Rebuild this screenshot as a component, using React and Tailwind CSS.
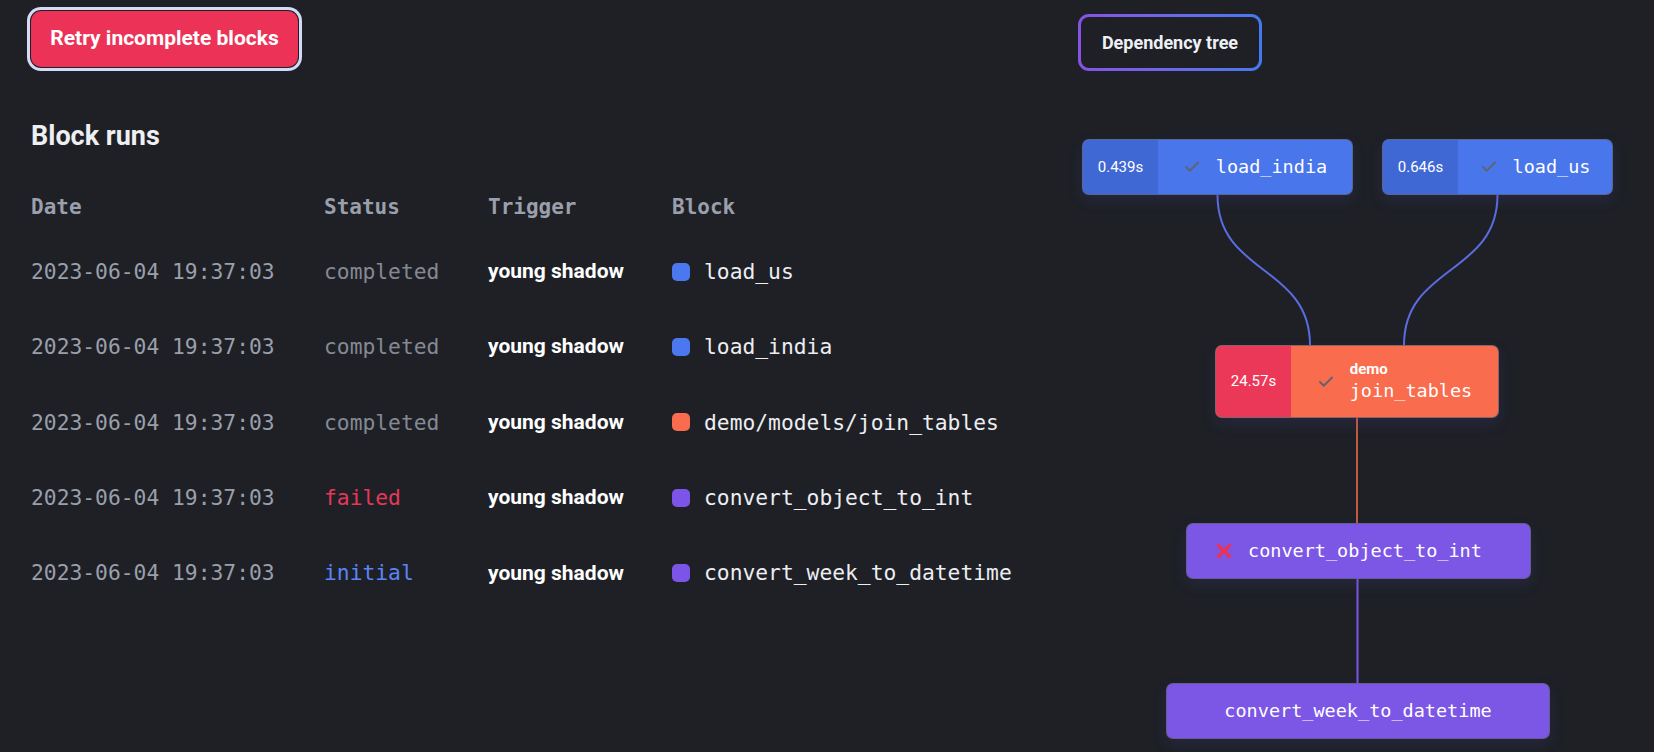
import { Check, X } from 'lucide-react'

// Block run rows shown in the table on the left
const runs = [
  { status: 'completed', block: 'load_us', color: 'bg-[#4b78ee]' },
  { status: 'completed', block: 'load_india', color: 'bg-[#4b78ee]' },
  { status: 'completed', block: 'demo/models/join_tables', color: 'bg-[#f96c4e]' },
  { status: 'failed', block: 'convert_object_to_int', color: 'bg-[#7c55e8]' },
  { status: 'initial', block: 'convert_week_to_datetime', color: 'bg-[#7c55e8]' },
]

const statusClass = {
  completed: 'text-[#858993] font-light',
  failed: 'text-[#e4385a]',
  initial: 'text-[#5b84f5]',
}

const mono = 'font-["DejaVu_Sans_Mono",monospace]'

function RunsTable() {
  return (
    <div className={`${mono} mt-[29px]`}>
      <div className="grid grid-cols-[293px_164px_184px_1fr] h-[53px] items-center text-[21px] font-bold text-[#9a9fab]">
        <span>Date</span>
        <span>Status</span>
        <span>Trigger</span>
        <span>Block</span>
      </div>
      {runs.map((r, i) => (
        <div key={i} className="grid grid-cols-[293px_164px_184px_1fr] h-[75.4px] items-center text-[21.3px]">
          <span className="text-[#9a9faa]">2023-06-04 19:37:03</span>
          <span className={statusClass[r.status]}>{r.status}</span>
          <span className="font-['Roboto',sans-serif] font-bold text-[21px] text-white">young shadow</span>
          <span className="flex items-center gap-[14px] text-[#eceef2]">
            <span className={`w-[18px] h-[18px] rounded-[5px] ${r.color}`} />
            {r.block}
          </span>
        </div>
      ))}
    </div>
  )
}

// timed node: darker timing strip on the left, check + name on the right
function TimedNode({ className, time, name, group, base, strip }) {
  return (
    <div className={`absolute flex rounded-[7px] overflow-hidden border border-[#5b6070]/70 shadow-[0_6px_14px_rgba(70,70,170,0.18)] ${base} ${className}`}>
      <div className={`w-[75px] shrink-0 flex items-center justify-center font-['Roboto',sans-serif] text-[15px] text-white ${strip}`}>
        {time}
      </div>
      <div className="flex-1 flex items-center justify-center gap-[15px]">
        <Check className="w-[18px] h-[18px] text-[#5f6470]" strokeWidth={2.5} />
        <div className="flex flex-col">
          {group && <span className="font-['Roboto',sans-serif] font-bold text-[15px] leading-[18px] text-white">{group}</span>}
          <span className={`${mono} text-[18.5px] leading-[26px] text-white`}>{name}</span>
        </div>
      </div>
    </div>
  )
}

function DependencyGraph() {
  return (
    <div className="relative mt-[29px] h-[652px]">
      <svg className="absolute inset-0" width="576" height="652" fill="none">
        <path d="M139.5 95 C139.5 175, 232 165, 232 245" stroke="#5a6de0" strokeWidth="2" />
        <path d="M419.5 95 C419.5 175, 326 165, 326 245" stroke="#5a6de0" strokeWidth="2" />
        <path d="M279 318 L279 423" stroke="#f96c4e" strokeWidth="1.5" />
        <path d="M279.5 479 L279.5 583" stroke="#7c57e6" strokeWidth="2" />
      </svg>

      <TimedNode
        className="left-[4px] top-[39px] w-[271px] h-[56px]"
        time="0.439s"
        name="load_india"
        base="bg-[#4a76ec]"
        strip="bg-[#4068d4]"
      />
      <TimedNode
        className="left-[304px] top-[39px] w-[231px] h-[56px]"
        time="0.646s"
        name="load_us"
        base="bg-[#4a76ec]"
        strip="bg-[#4068d4]"
      />
      <TimedNode
        className="left-[137px] top-[245px] w-[284px] h-[73px]"
        time="24.57s"
        name="join_tables"
        group="demo"
        base="bg-[#f96c4e]"
        strip="bg-[#ec3858]"
      />

      <div className="absolute left-[108px] top-[423px] w-[345px] h-[56px] flex items-center gap-[13px] pl-[26px] rounded-[7px] bg-[#7c57e6] border border-[#5b6070]/70 shadow-[0_6px_14px_rgba(70,70,170,0.18)]">
        <X className="w-[22px] h-[22px] text-[#ea3354]" strokeWidth={3.5} />
        <span className={`${mono} text-[18.5px] text-white`}>convert_object_to_int</span>
      </div>

      <div className="absolute left-[88px] top-[583px] w-[384px] h-[56px] flex items-center justify-center rounded-[7px] bg-[#7c57e6] border border-[#5b6070]/70 shadow-[0_6px_14px_rgba(70,70,170,0.18)]">
        <span className={`${mono} text-[18.5px] text-white`}>convert_week_to_datetime</span>
      </div>
    </div>
  )
}

export default function App() {
  return (
    <div className="w-[1654px] h-[752px] overflow-hidden bg-[#1e2026] flex font-['Roboto',sans-serif]">
      <div className="w-[1078px] shrink-0 pl-[31px] pt-[11px]">
        <button className="w-[267px] h-[56px] rounded-[10px] bg-[#ec3256] text-white font-bold text-[21px] shadow-[0_0_0_1px_#1e2026,0_0_0_4px_#d3dbf7]">
          Retry incomplete blocks
        </button>
        <h2 className="mt-[53px] text-[27px] leading-[32px] font-bold text-[#eeeff3]">Block runs</h2>
        <RunsTable />
      </div>

      <div className="flex-1 pt-[14px]">
        <div className="w-[184px] h-[57px] rounded-[11px] p-[3px] bg-gradient-to-r from-[#8752e6] to-[#4479f0]">
          <div className="w-full h-full rounded-[8px] bg-[#1e2026] flex items-center justify-center text-[18px] font-bold text-[#eef0f5]">
            Dependency tree
          </div>
        </div>
        <DependencyGraph />
      </div>
    </div>
  )
}
